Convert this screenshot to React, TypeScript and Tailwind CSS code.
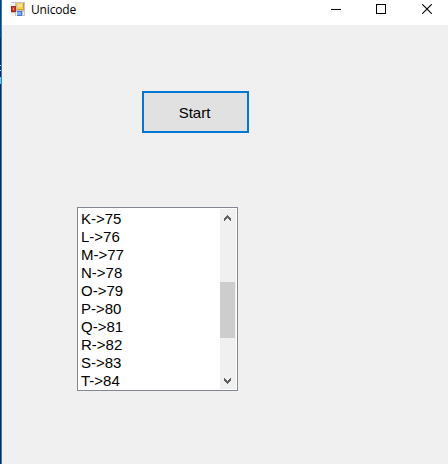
const items = ["K", "L", "M", "N", "O", "P", "Q", "R", "S", "T"];

function FormIcon() {
  return (
    <svg className="ml-[9px] mt-0.5 h-[14px] w-[14px] shrink-0" viewBox="0 0 14 14" shapeRendering="crispEdges">
      <path d="M0 0h14v14H0z" fill="#c3c3c6" />
      <path d="M0 1h4v3H0zM0 11h4v3H0zM5 10h1v4H5zM12 10h1v3h-1z" fill="#f1f1f1" />
      <path d="M0 4h5v6H0z" fill="#a32a20" />
      <path d="M1 5h3v4H1z" fill="#d8382a" />
      <path d="M2 6h1v2H2z" fill="#f08a70" />
      <path d="M6 1h7v7H6z" fill="#d79b18" />
      <path d="M6 1h6v6H6z" fill="#ffcf50" />
      <path d="M7 2h4v3H7z" fill="#ffe28a" />
      <path d="M6 9h5v5H6z" fill="#4577d2" />
      <path d="M6 10h4v3H6z" fill="#7fb0f8" />
    </svg>
  );
}

function TitleBar() {
  return (
    <header className="flex h-[25px] items-start bg-white">
      <FormIcon />
      <h1 className="ml-[6px] mt-px flex-1 font-['Open_Sans','Noto_Sans',sans-serif] text-[12px] leading-[18px] tracking-[-0.15px] text-black">
        Unicode
      </h1>
      <div className="mr-4 mt-1 flex gap-[35px]">
        <button aria-label="Minimize" className="block h-[10px] w-[10px]">
          <svg className="block h-[10px] w-[10px]" viewBox="0 0 10 10" shapeRendering="crispEdges">
            <path d="M0 5h10v1H0z" />
          </svg>
        </button>
        <button aria-label="Maximize" className="block h-[10px] w-[10px]">
          <svg className="block h-[10px] w-[10px]" viewBox="0 0 10 10" shapeRendering="crispEdges">
            <path d="M.5 .5h9v9h-9z" fill="none" stroke="#000" />
          </svg>
        </button>
        <button aria-label="Close" className="ml-px block h-[10px] w-[10px]">
          <svg className="block h-[10px] w-[10px]" viewBox="0 0 10 10">
            <path d="M.2 .2l9.6 9.6M9.8 .2L.2 9.8" fill="none" stroke="#000" strokeWidth="1.1" />
          </svg>
        </button>
      </div>
    </header>
  );
}

function ScrollBar() {
  return (
    <div className="mr-px flex w-4 flex-col bg-[#f0f0f0]">
      <svg className="ml-1 mt-[6px] block h-[6px] w-[7px]" viewBox="0 0 7 6" shapeRendering="crispEdges">
        <path d="M3 0h1v1h1v1h1v1h1v3H6V5H5V4H4V3H3v1H2v1H1v1H0V3h1V2h1V1h1z" fill="#606060" />
      </svg>
      <div className="mt-[61px] h-14 w-[15px] bg-[#cdcdcd]" />
      <svg className="ml-1 mt-10 block h-[6px] w-[7px]" viewBox="0 0 7 6" shapeRendering="crispEdges">
        <path d="M3 6h1V5h1V4h1V3h1V0H6v1H5v1H4v1H3V2H2V1H1V0H0v3h1v1h1v1h1z" fill="#606060" />
      </svg>
    </div>
  );
}

export default function App() {
  return (
    <div className="flex h-[464px] w-[448px] overflow-hidden bg-[#f0f0f0] font-['Liberation_Sans',Arial,sans-serif] text-black">
      <div className="flex w-px shrink-0 flex-col bg-[#202126]">
        <div className="h-[18px] bg-[#26364c]" />
        <div className="h-5 bg-[#35353d]" />
        <div className="mt-[27px] h-px bg-[#c4c4c4]" />
        <div className="mt-1 h-px bg-[#c4c4c4]" />
        <div className="mt-[6px] h-[7px] bg-[#86c7b5]" />
      </div>
      <div className="w-px shrink-0 bg-[#1883d7]" />
      <div className="min-w-0 flex-1">
        <TitleBar />
        <main className="flex flex-col items-start">
          <button className="ml-[140px] mt-[66px] h-[42px] w-[107px] border-2 border-[#0078d7] bg-[#e1e1e1] pt-0.5 pr-0.5 text-[15px] leading-[18px]">
            Start
          </button>
          <div className="ml-[75px] mt-[74px] flex h-[184px] w-[161px] justify-between border border-[#828790] bg-white py-px">
            <ul className="ml-[3px] pt-px text-[15px] leading-[18px]">
              {items.map((letter) => (
                <li key={letter}>{`${letter}->${letter.charCodeAt(0)}`}</li>
              ))}
            </ul>
            <ScrollBar />
          </div>
        </main>
      </div>
    </div>
  );
}
